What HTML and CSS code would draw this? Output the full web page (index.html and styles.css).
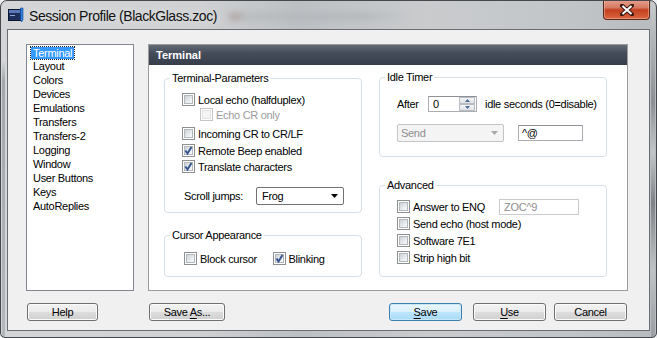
FILE: index.html
```html
<!DOCTYPE html>
<html>

<head>
    <meta charset="UTF-8">
    <title>Session Profile</title>
    <link rel="stylesheet" href="styles.css">
</head>

<body>
    <div class='window'>
        <div class='titlebar'>
            <svg class='app-icon' width='16' height='16' viewBox='0 0 16 16'>
                <rect x='0.5' y='2.5' width='12' height='11' fill='#1d2f5a' stroke='#0c1530' />
                <rect x='1' y='3' width='11' height='3' fill='#5b79b8' />
                <rect x='2' y='8' width='5' height='1' fill='#8fa6d6' />
                <path d='M12.5 1 L15 1 L15 12.5 L13.7 15 L12.5 12.5 Z' fill='#2f7fe0' stroke='#114a9a' stroke-width='0.6' />
            </svg>
            <span class='title'>Session Profile (BlackGlass.zoc)</span>
            <div class='behind'></div>
            <div class='close'>
                <svg width='14' height='12' viewBox='0 0 14 12'>
                    <path d='M2 1.5 L12 10.5 M12 1.5 L2 10.5' stroke='#3b1a14' stroke-width='4' stroke-linecap='square' />
                    <path d='M2.5 2 L11.5 10 M11.5 2 L2.5 10' stroke='#fff' stroke-width='2' />
                </svg>
            </div>
        </div>
        <div class='client'>
            <div class='main'>
                <div class='list'>
                    <div class='item sel'><span>Terminal</span></div>
                    <div class='item'>Layout</div>
                    <div class='item'>Colors</div>
                    <div class='item'>Devices</div>
                    <div class='item'>Emulations</div>
                    <div class='item'>Transfers</div>
                    <div class='item'>Transfers-2</div>
                    <div class='item'>Logging</div>
                    <div class='item'>Window</div>
                    <div class='item'>User Buttons</div>
                    <div class='item'>Keys</div>
                    <div class='item'>AutoReplies</div>
                </div>
                <div class='panel'>
                    <div class='panel-head'>Terminal</div>
                    <div class='panel-body'>
                        <div class='col-left'>
                            <div class='group params'>
                                <span class='group-title'>Terminal-Parameters</span>
                                <div class='row r1'><span class='cb'></span>Local echo (halfduplex)</div>
                                <div class='row r2 off'><span class='cb'></span>Echo CR only</div>
                                <div class='row r3'><span class='cb'></span>Incoming CR to CR/LF</div>
                                <div class='row r4'><span class='cb on'><svg class='tick' viewBox='0 0 13 13'><path d='M3.5 6.5 L5.5 9.5 L9.5 3' /></svg></span>Remote Beep enabled</div>
                                <div class='row r5'><span class='cb on'><svg class='tick' viewBox='0 0 13 13'><path d='M3.5 6.5 L5.5 9.5 L9.5 3' /></svg></span>Translate characters</div>
                                <div class='row scroll'>
                                    <span class='scroll-label'>Scroll jumps:</span>
                                    <div class='combo'>
                                        <span>Frog</span>
                                        <svg width='7' height='4' viewBox='0 0 7 4'><path d='M0 0 L7 0 L3.5 4 Z' fill='#000' /></svg>
                                    </div>
                                </div>
                            </div>
                            <div class='group cursor'>
                                <span class='group-title'>Cursor Appearance</span>
                                <div class='row'>
                                    <span class='cb-item'><span class='cb'></span>Block cursor</span>
                                    <span class='cb-item'><span class='cb on'><svg class='tick' viewBox='0 0 13 13'><path d='M3.5 6.5 L5.5 9.5 L9.5 3' /></svg></span>Blinking</span>
                                </div>
                            </div>
                        </div>
                        <div class='col-right'>
                            <div class='group idle'>
                                <span class='group-title'>Idle Timer</span>
                                <div class='row after'>
                                    <span class='after-label'>After</span>
                                    <div class='spin'>
                                        <span class='spin-value'>0</span>
                                        <div class='spin-buttons'>
                                            <div class='spin-btn'><svg width='5' height='3' viewBox='0 0 5 3'><path d='M0 3 L5 3 L2.5 0 Z' fill='#4a6a9a' /></svg></div>
                                            <div class='spin-btn'><svg width='5' height='3' viewBox='0 0 5 3'><path d='M0 0 L5 0 L2.5 3 Z' fill='#4a6a9a' /></svg></div>
                                        </div>
                                    </div>
                                    <span class='idle-text'>idle seconds (0=disable)</span>
                                </div>
                                <div class='row send'>
                                    <div class='combo disabled'>
                                        <span>Send</span>
                                        <svg width='7' height='4' viewBox='0 0 7 4'><path d='M0 0 L7 0 L3.5 4 Z' fill='#a8a8a8' /></svg>
                                    </div>
                                    <div class='field send-field'>^@</div>
                                </div>
                            </div>
                            <div class='group advanced'>
                                <span class='group-title'>Advanced</span>
                                <div class='row'><span class='cb'></span><span class='enq-label'>Answer to ENQ</span><div class='field enq-field'>ZOC^9</div></div>
                                <div class='row'><span class='cb'></span>Send echo (host mode)</div>
                                <div class='row'><span class='cb'></span>Software 7E1</div>
                                <div class='row'><span class='cb'></span>Strip high bit</div>
                            </div>
                        </div>
                    </div>
                </div>
            </div>
            <div class='buttons'>
                <div class='button help'>Help</div>
                <div class='button save-as'>Save <u>A</u>s...</div>
                <div class='button save default'><u>S</u>ave</div>
                <div class='button use'><u>U</u>se</div>
                <div class='button cancel'>Cancel</div>
            </div>
        </div>
    </div>
</body>

</html>
```

FILE: styles.css
```css
html,
body {
    padding: 0;
    margin: 0;
}

body {
    background: #eceef0;
    font-family: "Liberation Sans", Arial, sans-serif;
    font-size: 11px;
    letter-spacing: -0.3px;
    color: #000;
}

.window {
    width: 657px;
    height: 338px;
    box-sizing: border-box;
    border: 1px solid #45484c;
    border-radius: 7px 7px 5px 5px;
    overflow: hidden;
    background:
        linear-gradient(transparent 60px, #a3a7ab 80px, #b4b8bc 100%) 1px 0 / 3px 100% no-repeat,
        linear-gradient(#c9ccce, #8d9195 30%, #c3c6c9 45%, #7f8387 60%, #c0c3c6 80%, #9a9ea2) right 1px top 0 / 4px 100% no-repeat,
        linear-gradient(to right, #d3d5d7, #cfd1d3 30%, #bdc0c3 45%, #c9cbcd 65%, #c3c6c9 85%, #b9bcbf);
}

.titlebar {
    height: 28px;
    display: flex;
    align-items: center;
    padding-left: 7px;
    position: relative;
}

.app-icon {
    margin-right: 5px;
    flex: none;
}

.title {
    font-size: 14px;
    letter-spacing: -0.45px;
    color: #111;
    text-shadow: 0 0 6px #e8e8e8;
    margin-top: 1px;
}

/* blurred window seen through the glass */
.behind {
    position: absolute;
    left: 228px;
    top: 12px;
    width: 180px;
    height: 7px;
    background: linear-gradient(to right, #a08a84 0 10px, #b0b3b6 16px, #a9adb1 75%, transparent);
    filter: blur(3px);
    opacity: 0.55;
}

.close {
    margin-left: auto;
    margin-right: 6px;
    align-self: flex-start;
    margin-top: -1px;
    width: 47px;
    height: 20px;
    box-sizing: border-box;
    border: 1px solid #5a271d;
    border-top: none;
    border-radius: 0 0 4px 4px;
    background: linear-gradient(#e6a08e, #d67a63 40%, #c34020 52%, #cf5530 80%, #d86a40);
    box-shadow: inset 0 0 0 1px rgba(255, 200, 180, 0.45);
    display: flex;
    justify-content: center;
    align-items: center;
}

.client {
    margin: 0 6px;
    height: 302px;
    box-sizing: border-box;
    border: 1px solid #6a6e72;
    background: #f0f0f0;
    padding: 14px 0 0 18px;
}

.main {
    display: flex;
    height: 247px;
}

.list {
    width: 108px;
    flex: none;
    box-sizing: border-box;
    border: 1px solid #828790;
    background: #fff;
    padding: 0 0 0 4px;
    margin-right: 14px;
}

.item {
    height: 14px;
    line-height: 14px;
    padding-left: 2px;
}

.item.sel {
    padding-left: 0;
}

.item.sel span {
    display: inline-block;
    height: 12px;
    line-height: 12px;
    padding: 0 2px;
    background: #3399ff;
    color: #fff;
    outline: 1px dotted #222;
    vertical-align: top;
    margin-top: 2px;
}

.panel {
    width: 480px;
    flex: none;
    box-sizing: border-box;
    border: 1px solid #9c9c9c;
    background: #fff;
}

.panel-head {
    height: 20px;
    line-height: 20px;
    background: linear-gradient(#636b79, #454d5b 40%, #373e4a);
    color: #fff;
    font-weight: bold;
    letter-spacing: 0;
    padding-left: 7px;
}

.panel-body {
    display: flex;
    padding: 13px 0 0 15px;
    gap: 17px;
}

.col-left {
    width: 198px;
}

.col-right {
    width: 228px;
}

.group {
    position: relative;
    box-sizing: border-box;
    border: 1px solid #d5dfe5;
    border-radius: 4px;
}

.group-title {
    position: absolute;
    top: -7px;
    left: 5px;
    padding: 0 2px;
    line-height: 13px;
    background: #fff;
}

.row {
    display: flex;
    align-items: center;
    height: 17px;
}

.cb {
    width: 13px;
    height: 13px;
    flex: none;
    box-sizing: border-box;
    border: 1px solid #8e8f8f;
    background: #fff;
    margin-right: 3px;
    position: relative;
}

.cb::before {
    content: '';
    position: absolute;
    inset: 1px;
    border: 1px solid #b3b8bd;
    background: linear-gradient(135deg, #cdd1d6, #eef0f2 70%, #f8f8f8);
}

.tick {
    position: absolute;
    inset: -1px;
    width: 13px;
    height: 13px;
}

.tick path {
    fill: none;
    stroke: #35538f;
    stroke-width: 1.9;
}

.off {
    color: #9c9c9c;
}

.off .cb {
    border-color: #c4c4c4;
}

.off .cb::before {
    border-color: #e2e2e2;
    background: #f4f4f4;
}

.params {
    height: 135px;
    padding: 12px 0 0 17px;
}

.r2 {
    margin-top: -2px;
    padding-left: 18px;
}

.r3 {
    margin-top: 2px;
}

.r5 {
    margin-top: -1px;
}

.scroll {
    margin-top: 12px;
    height: 18px;
    padding-left: 2px;
}

.scroll-label {
    width: 72px;
}

.combo {
    width: 88px;
    height: 18px;
    box-sizing: border-box;
    border: 1px solid #707070;
    border-radius: 2px;
    background: #fff;
    display: flex;
    align-items: center;
    justify-content: space-between;
    padding: 0 5px 0 5px;
}

.combo.disabled {
    width: 107px;
    border-color: #c2c5c8;
    background: #f4f4f4;
    color: #8e8e8e;
    padding-left: 3px;
}

.cursor {
    margin-top: 22px;
    height: 42px;
    padding: 14px 0 0 19px;
}

.cb-item {
    display: flex;
    align-items: center;
    width: 96px;
}

.idle {
    margin-top: -1px;
    height: 80px;
    padding: 18px 0 0 17px;
}

.after {
    height: 16px;
}

.after-label {
    width: 31px;
}

.spin {
    width: 49px;
    height: 16px;
    box-sizing: border-box;
    border: 1px solid #abadb3;
    border-top-color: #8e9198;
    display: flex;
    justify-content: space-between;
    background: #fff;
}

.spin-value {
    padding-left: 4px;
    line-height: 14px;
}

.spin-buttons {
    width: 16px;
    display: flex;
    flex-direction: column;
    padding: 0 1px 0 0;
}

.spin-btn {
    flex: 1;
    box-sizing: border-box;
    border: 1px solid #b9bcc0;
    background: linear-gradient(#f4f5f6, #dfe2e5);
    display: flex;
    align-items: center;
    justify-content: center;
}

.idle-text {
    margin-left: 8px;
}

.send {
    margin-top: 12px;
    height: 18px;
}

.field {
    height: 16px;
    box-sizing: border-box;
    border: 1px solid #abadb3;
    border-top-color: #8e9198;
    background: #fff;
    line-height: 14px;
    padding-left: 3px;
}

.send-field {
    width: 65px;
    margin-left: 14px;
}

.advanced {
    margin-top: 28px;
    height: 92px;
    padding: 12px 0 0 17px;
}

.enq-label {
    width: 86px;
}

.enq-field {
    width: 80px;
    color: #8e8e8e;
    padding-left: 4px;
    border-color: #c8cacd;
}

.buttons {
    display: flex;
    margin-top: 12px;
    padding-right: 22px;
}

.button {
    height: 18px;
    box-sizing: border-box;
    border: 1px solid #707070;
    border-radius: 3px;
    background: linear-gradient(#f2f2f2, #ebebeb 50%, #dddddd 51%, #cfcfcf);
    box-shadow: inset 0 0 0 1px #fbfbfb;
    text-align: center;
    line-height: 16px;
}

.button u {
    text-underline-offset: 2px;
}

.help {
    width: 71px;
    margin-left: 1px;
}

.save-as {
    width: 76px;
    margin-left: 51px;
}

.save {
    width: 73px;
    margin-left: auto;
}

.default {
    border-color: #3c7fb1;
    background: linear-gradient(#eaf6fd, #d9f0fc 50%, #bee6fd 51%, #a7d9f5);
    box-shadow: inset 0 0 0 1px #c8e8f8;
}

.use {
    width: 73px;
    margin-left: 11px;
}

.cancel {
    width: 73px;
    margin-left: 8px;
}
```
